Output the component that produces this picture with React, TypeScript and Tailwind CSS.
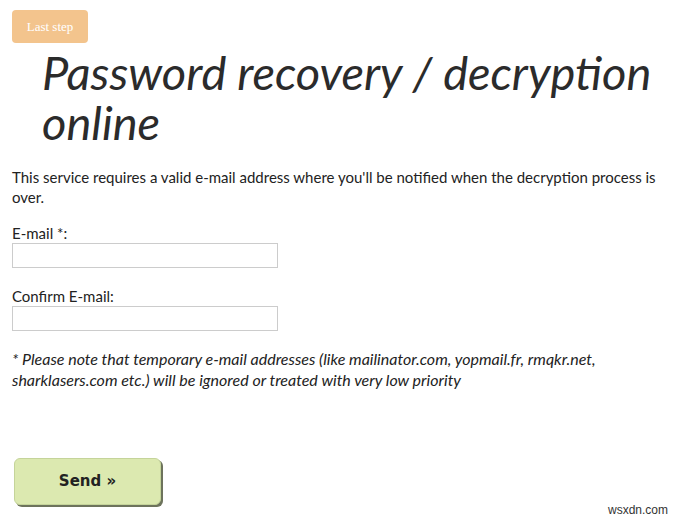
export default function App() {
  return (
    <main className="relative w-[680px] h-[525px] bg-white overflow-hidden text-[#222] font-['Lato',sans-serif]">
      <div className="pl-3 pt-[10px]">
        <div className="inline-flex items-center justify-center w-[76px] h-[33px] rounded bg-[#f3c48d] text-white text-[13px] font-['Liberation_Serif',serif]">
          Last step
        </div>
      </div>
      <h1 className="pl-[42px] pr-2 mt-[4px] text-[47px] leading-[50px] italic text-[#2b2b2b]">
        Password recovery / decryption online
      </h1>
      <p className="pl-3 pr-3 mt-[20px] text-[15px] leading-[20px]">
        This service requires a valid e-mail address where you'll be notified when the decryption process is over.
      </p>
      <form className="px-3 mt-[16px]">
        <label className="block text-[15px] leading-[20px]">E-mail *:</label>
        <input className="block w-[266px] h-[25px] border border-[#ccc]" />
        <label className="block text-[15px] leading-[20px] mt-[18px]">Confirm E-mail:</label>
        <input className="block w-[266px] h-[25px] border border-[#ccc]" />
        <p className="mt-[17px] text-[16px] leading-[21px] italic">
          * Please note that temporary e-mail addresses (like mailinator.com, yopmail.fr, rmqkr.net,
          <br />
          sharklasers.com etc.) will be ignored or treated with very low priority
        </p>
        <button
          type="button"
          className="mt-[68px] ml-[2px] w-[147px] h-[47px] rounded-md bg-[#dce9b0] border border-[#c5d49a] shadow-[2px_2px_0_#6d735c] text-[15px] font-bold text-[#222] font-['DejaVu_Sans',sans-serif]"
        >
          Send »
        </button>
      </form>
      <div className="absolute right-[12px] bottom-[6px] text-[12px] text-[#333] font-['Liberation_Sans',sans-serif]">
        wsxdn.com
      </div>
    </main>
  );
}
